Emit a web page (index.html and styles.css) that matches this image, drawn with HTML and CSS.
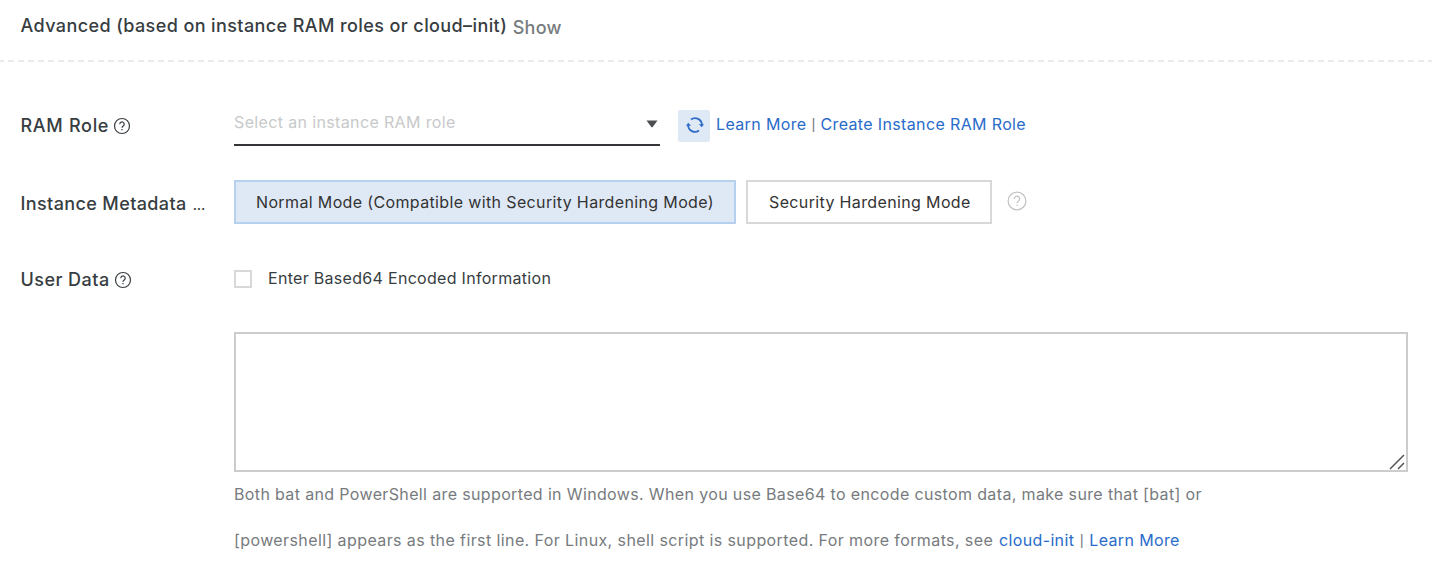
FILE: index.html
```html
<!DOCTYPE html>
<html lang="en">
<head>
<meta charset="utf-8">
<title>Advanced</title>
<link rel="stylesheet" href="styles.css">
</head>
<body>
<header class="head"><h2 class="title">Advanced (based on instance RAM roles or cloud–init)</h2><a class="show">Show</a></header>
<div class="dash"></div>
<main class="form">
  <section class="row role">
    <div class="label"><span class="l-role">RAM Role</span><svg class="help" viewBox="0 0 18 18"><circle cx="9" cy="9" r="7.5"/><path d="M6.8 7.2a2.2 2.2 0 1 1 3.4 1.8C9.3 9.6 9 9.9 9 10.8M9 12.1v1.2"/></svg></div>
    <div class="select"><span class="placeholder">Select an instance RAM role</span><svg class="caret" viewBox="0 0 12 8"><path d="M.5.5h11L6.9 6.8Q6 7.8 5.1 6.8z"/></svg></div>
    <button class="refresh"><svg viewBox="0 0 18 16"><path class="arc" d="M5 2.400A6.900 6.900 0 0 1 15.900 8M13 13.600A6.900 6.900 0 0 1 2.100 8"/><path class="tip" d="M12.900 7.200h5.100l-2.200 3zM0 8.800h5.100l-2.900-3z"/></svg></button>
    <div class="links"><a class="k1">Learn More</a><i class="bar">|</i><a class="k2">Create Instance RAM Role</a></div>
  </section>
  <section class="row meta">
    <div class="label"><span class="l-meta">Instance Metadata</span><span class="dots">...</span></div>
    <button class="mode on"><span class="m1">Normal Mode (Compatible with Security Hardening Mode)</span></button>
    <button class="mode off"><span class="m2">Security Hardening Mode</span></button>
    <svg class="help pale" viewBox="0 0 18 18"><circle cx="9" cy="9" r="8"/><path d="M6.600 7a2.400 2.400 0 1 1 3.700 2C9.300 9.600 9 9.900 9 11M9 12.300v1.200"/></svg>
  </section>
  <section class="row data">
    <div class="label"><span class="l-data">User Data</span><svg class="help" viewBox="0 0 18 18"><circle cx="9" cy="9" r="7.5"/><path d="M6.8 7.2a2.2 2.2 0 1 1 3.4 1.8C9.3 9.6 9 9.9 9 10.8M9 12.1v1.2"/></svg></div>
    <span class="box"></span><span class="check">Enter Based64 Encoded Information</span>
  </section>
  <div class="area"><svg class="grip" viewBox="0 0 16 16"><path d="M1 15 15 1M9 15l6-6"/></svg></div>
  <div class="note n1">Both bat and PowerShell are supported in Windows. When you use Base64 to encode custom data, make sure that [bat] or</div>
  <div class="note n2"><span>[powershell] appears as the first line. For Linux, shell script is supported. For more formats, see</span><a class="ci">cloud-init</a><i class="bar">|</i><a class="k3">Learn More</a></div>
</main>
</body>
</html>
```
FILE: styles.css
```css
* { box-sizing: border-box; }
body { margin: 0; width: 1432px; height: 572px; overflow: hidden; background: #fff; color: #373d41; font: 400 16px/24px Inter, "Liberation Sans", sans-serif; letter-spacing: .36px; white-space: nowrap; }
.head { display: flex; height: 60px; padding: 14px 0 0 20.5px; font-size: 18px; }
.title { margin: 0; font: 500 18px/24px Inter, sans-serif; letter-spacing: .4px; }
.show { margin: 2px 0 0 5.5px; color: #777b7e; font: 500 18px/24px Inter, sans-serif; letter-spacing: .3px; }
.dash { height: 2px; background: repeating-linear-gradient(90deg, #ebebeb 0 4px, #fff 4px 8px, #ebebeb 8px 10px); }
.form { display: flex; flex-direction: column; padding-left: 20.5px; }
.row { display: flex; }
.label { display: flex; width: 213.5px; flex: none; font: 500 18px/24px Inter, sans-serif; letter-spacing: .45px; }
.l-role { letter-spacing: .7px; }
.l-meta { letter-spacing: .38px; }
.help { width: 18px; height: 18px; margin: 3px 0 0 4px; fill: none; stroke: #373d41; stroke-width: 1.2; }
.role { margin-top: 48px; height: 36px; }
.role .label { padding-top: 4px; }
.select { display: flex; justify-content: space-between; width: 426px; border-bottom: 2px solid #333539; color: #c7c9ca; }
.caret { width: 12px; height: 8px; margin: 10px 2px 0 0; fill: #4c4e50; }
.refresh { width: 32px; height: 32px; margin-left: 18px; padding: 7px 7px 7px 8px; border: 0; border-radius: 2px; background: #dfe9f6; }
.refresh svg { display: block; width: 18px; height: 16px; margin-top: -2px; }
.arc { fill: none; stroke: #2e6cc8; stroke-width: 1.8; }
.tip { fill: #2e6cc8; }
.links { display: flex; margin: 2px 0 0 6px; }
a { color: #296bc9; }
.bar { width: 14px; text-align: center; font: 400 16px/25px Roboto, sans-serif; color: #777b7e; letter-spacing: 0; }
.meta { margin-top: 34px; height: 44px; }
.meta .label { padding-top: 12px; }
.dots { margin-left: 6px; font-size: 15px; font-weight: 400; letter-spacing: -.2px; padding-top: 1px; }
.mode { height: 44px; padding: 0 0 0 20px; border: 2px solid #d8d8d8; background: #fff; color: #333; font: inherit; letter-spacing: inherit; text-align: left; }
.on { width: 502px; border-color: #b5d1ee; background: #dfe9f6; }
.off { width: 246px; margin-left: 10px; padding-left: 21px; }
.pale { width: 20px; height: 20px; margin: 11px 0 0 15px; stroke: #c2c2c2; stroke-width: 1.1; }
.data { margin-top: 44px; height: 24px; }
.box { width: 18px; height: 18px; margin-top: 2px; border: 2px solid #d8d8d8; }
.check { margin: -2px 0 0 16px; letter-spacing: .3px; }
.area { display: flex; justify-content: flex-end; align-items: flex-end; width: 1174px; height: 140px; margin: 40px 0 0 213.5px; padding: 0 1px 0 0; border: 2px solid #ccc; }
.grip { width: 16px; height: 16px; fill: none; stroke: #555; stroke-width: 1.5; }
.note { display: flex; margin-left: 213.5px; height: 46px; padding-top: 10px; color: #777b7e; }
.n2 span { width: 765px; letter-spacing: .4px; }
.n2 .bar { width: 15px; }
```
